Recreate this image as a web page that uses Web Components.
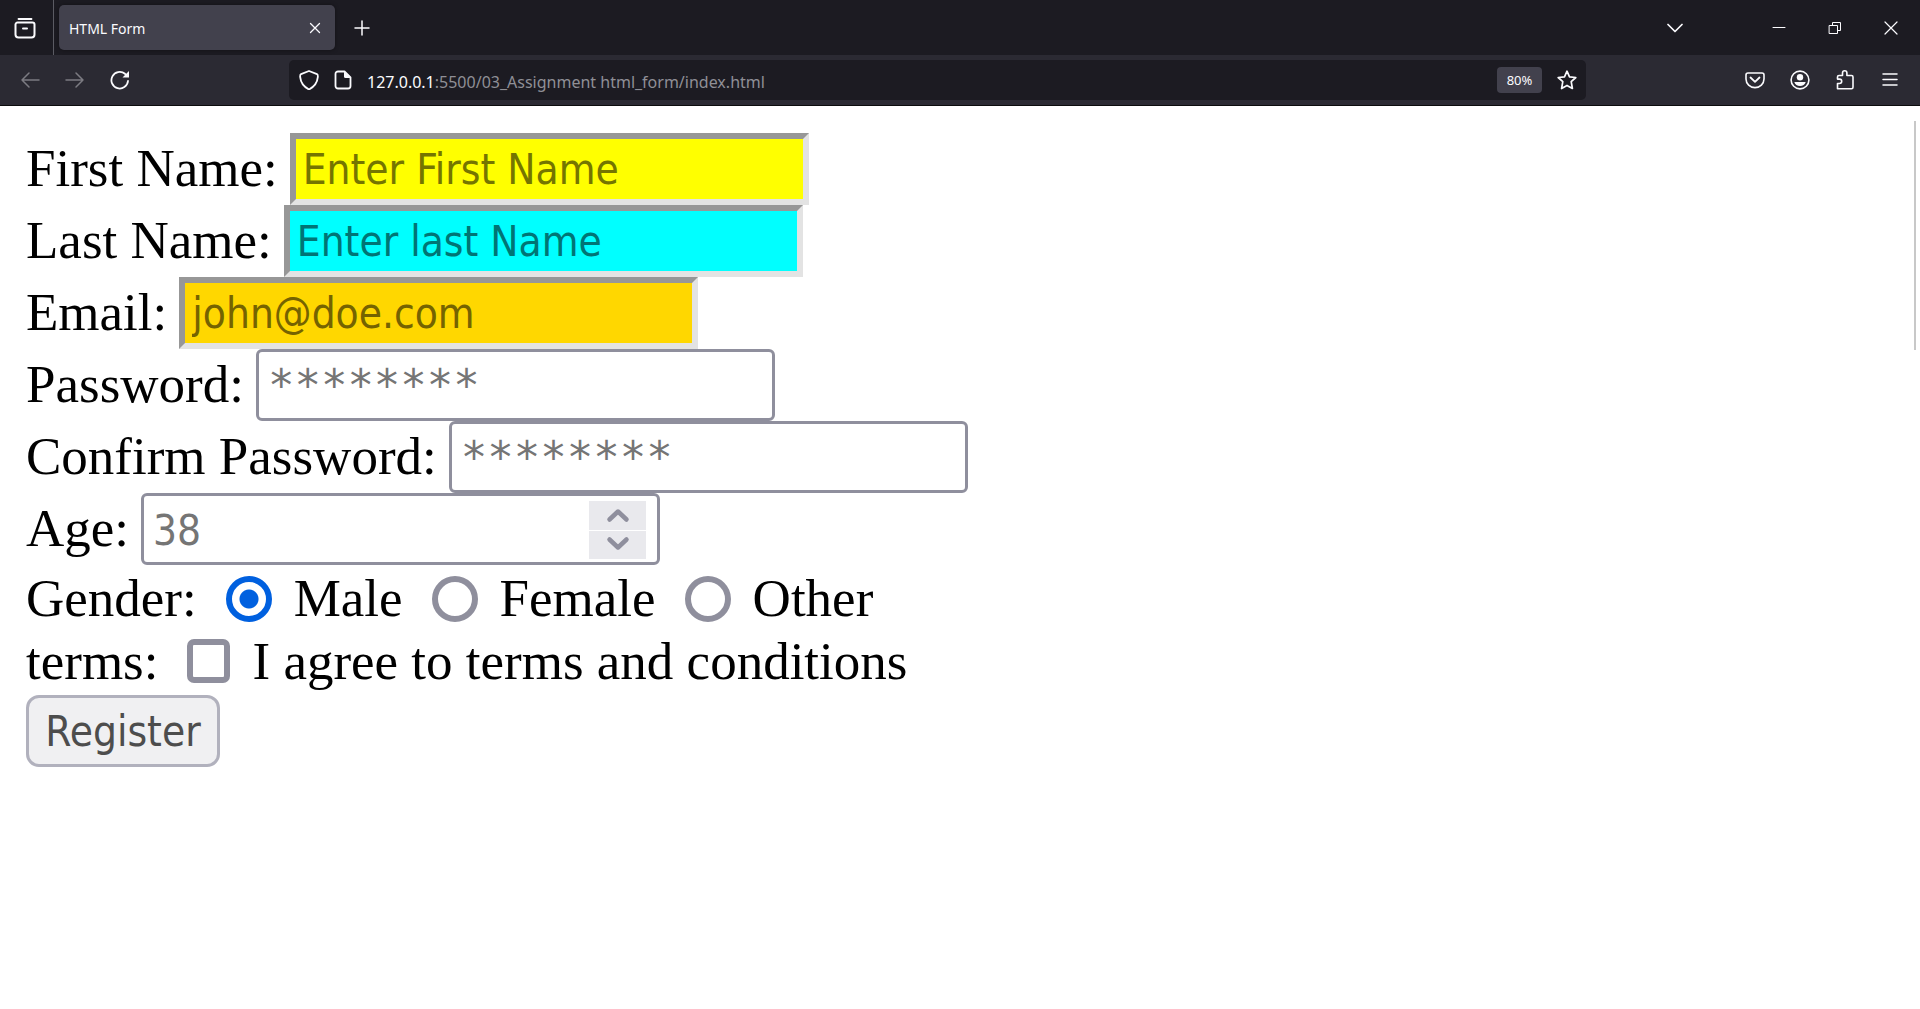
<!DOCTYPE html>
<html lang="en">
<head>
<meta charset="utf-8">
<title>HTML Form</title>
<style>
html, body { margin: 0; height: 100%; }
body { background: #fff; overflow: hidden; }
</style>
</head>
<body>
<browser-window>
  <tab-strip slot="chrome">HTML Form</tab-strip>
  <nav-bar slot="chrome" host="127.0.0.1" path=":5500/03_Assignment html_form/index.html" zoom="80%"></nav-bar>
  <register-form>
    <form-field label="First Name:" placeholder="Enter First Name" fill="#ffff00" ink="#757500"></form-field>
    <form-field label="Last Name:" placeholder="Enter last Name" fill="#00ffff" ink="#007575"></form-field>
    <form-field label="Email:" type="email" placeholder="john@doe.com" fill="#ffd700" ink="#756300"></form-field>
    <form-field label="Password:" type="password" placeholder="********"></form-field>
    <form-field label="Confirm Password:" type="password" placeholder="********"></form-field>
    <form-field label="Age:" type="number" placeholder="38"></form-field>
    <choice-row label="Gender:" type="radio" options="Male,Female,Other" checked="Male"></choice-row>
    <choice-row label="terms:" type="checkbox" options="I agree to terms and conditions"></choice-row>
    <submit-button>Register</submit-button>
  </register-form>
</browser-window>
<script>
const ICONS = {
  firefoxview: [22, '<path d="M4.500 2h13" stroke-width="1.800"/><path d="M3.500 5.500h15a2 2 0 0 1 2 2v10a3 3 0 0 1-3 3h-13a3 3 0 0 1-3-3v-10a2 2 0 0 1 2-2z" stroke-width="2"/><path d="M9 11.500h4" stroke-width="2"/>'],
  close: [12, '<path d="M1.500 1.500l9 9m0-9l-9 9" stroke-width="1.300"/>'],
  plus: [16, '<path d="M8 1v14M1 8h14" stroke-width="1.500"/>'],
  down: [16, '<path d="M1 4.500l7 7 7-7" stroke-width="1.700"/>'],
  minimize: [14, '<path d="M1 6.500h12" stroke-width="1"/>'],
  restore: [14, '<path d="M1.500 4.500h8v8h-8zM4.500 4.500v-3h8v8h-3" stroke-width="1" stroke-linejoin="miter"/>'],
  quit: [14, '<path d="M1 1l12 12m0-12L1 13" stroke-width="1.200"/>'],
  back: [20, '<path d="M19 10H2M9 3l-7 7 7 7" stroke-width="1.500"/>'],
  forward: [20, '<path d="M1 10h17M11 3l7 7-7 7" stroke-width="1.500"/>'],
  reload: [20, '<path d="M18 11a8.300 8.300 0 1 1-3-7.200l2 2" stroke-width="1.800"/><path d="M19 1v6.500h-6.500z" fill="currentColor" stroke="none"/>'],
  shield: [20, '<path d="M10 1l8 3.200c1 .4 1 1 .8 3-.5 5.500-3 9.300-8.800 12.300C4.200 16.500 1.700 12.700 1.200 7.200 1 5.200 1 4.600 2 4.200z" stroke-width="1.800"/>'],
  page: [20, '<path d="M5 1.500h6.500l6 6V16a2.500 2.500 0 0 1-2.500 2.500H5A2.500 2.500 0 0 1 2.500 16V4A2.500 2.500 0 0 1 5 1.500z" stroke-width="1.800"/><path d="M11 1.500l6.500 6.500H12.500A1.500 1.500 0 0 1 11 6.500z" fill="currentColor" stroke="none"/>'],
  star: [20, '<path d="M10 1.200l2.500 5.600 6.300.7-4.600 4.200 1.200 6.800L10 15.400l-5.400 3.100 1.200-6.800L1.200 7.500l6.300-.7z" stroke-width="1.700"/>'],
  pocket: [20, '<path d="M3 3h14a2 2 0 0 1 2 2v4a9 8.600 0 0 1-18 0V5a2 2 0 0 1 2-2z" stroke-width="1.600"/><path d="M5.500 7.500L10 11.800l4.500-4.300" stroke-width="1.800"/>'],
  account: [20, '<circle cx="10" cy="10" r="8.900" stroke-width="1.600"/><circle cx="10" cy="7.300" r="3.200" fill="currentColor" stroke="none"/><path d="M4.300 12h11.400c-.7 2.500-3 4-5.700 4s-5-1.500-5.700-4z" fill="currentColor" stroke="none"/>'],
  puzzle: [20, '<path d="M2.500 18.800V13.500H4.500a2.200 2.200 0 0 0 0-4.400H2.500V7A1.500 1.500 0 0 1 4 5.500h3.500V3a2.200 2.200 0 0 1 4.400 0v2.500H16.500A1.500 1.500 0 0 1 18 7v10.300a1.500 1.500 0 0 1-1.500 1.500z" stroke-width="1.600"/>'],
  menu: [20, '<path d="M3 4h14M3 9.500h14M3 15h14" stroke-width="1.500"/>'],
  spinup: [24, '<path d="M3.500 16.500l8.500-8 8.500 8" stroke-width="4.500"/>'],
  spindown: [24, '<path d="M3.500 6.500l8.500 8 8.500-8" stroke-width="4.500"/>']
};
const icon = name => {
  const [size, body] = ICONS[name];
  return `<svg width="${size}" height="${size}" viewBox="0 0 ${size} ${size}" fill="none" stroke="currentColor" stroke-linecap="round" stroke-linejoin="round" aria-hidden="true">${body}</svg>`;
};
const iconButton = (name, label, cls = '') => `<button type="button" class="${cls}" aria-label="${label}">${icon(name)}</button>`;

class Base extends HTMLElement {
  connectedCallback() {
    if (this.shadowRoot) return;
    this.attachShadow({ mode: 'open' }).innerHTML = `<style>:host, * { box-sizing: border-box; } svg { display: block; flex: none; }</style>${this.render()}`;
  }
  attr(name, fallback = '') { return this.getAttribute(name) || fallback; }
}

customElements.define('browser-window', class extends Base {
  render() {
    return `<style>
      :host { display: flex; flex-direction: column; height: 100vh; position: relative; }
      main { flex: 1; background: #fff; }
      .thumb { position: absolute; right: 4px; top: 121px; width: 2px; height: 229px; background: #c8c8c8; }
    </style><slot name="chrome"></slot><main><slot></slot></main><div class="thumb"></div>`;
  }
});

customElements.define('tab-strip', class extends Base {
  render() {
    return `<style>
      :host { display: flex; align-items: center; height: 55px; background: #1c1b22; color: #fbfbfe; font: 14px "Noto Sans", sans-serif; }
      button { display: flex; align-items: center; justify-content: center; padding: 0; border: 0; background: none; color: inherit; }
      .view { width: 54px; height: 55px; padding-right: 4px; border-right: 1px solid #5b5b63; }
      .tab { display: flex; align-items: center; justify-content: space-between; width: 276px; height: 45px; margin-left: 5px; padding: 0 14px 0 10px; border-radius: 5px; background: #42414d; box-shadow: 0 0 4px rgba(0,0,0,.4); }
      .tab span { padding-top: 1px; }
      .new { width: 54px; height: 45px; }
      .wc { width: 56px; height: 45px; }
      .list { margin-left: auto; margin-right: 48px; width: 56px; height: 45px; }
      .wc:last-child { margin-right: 1px; }
    </style>
    ${iconButton('firefoxview', 'View recent browsing', 'view')}
    <div class="tab"><span><slot></slot></span>${iconButton('close', 'Close tab')}</div>
    ${iconButton('plus', 'New tab', 'new')}
    ${iconButton('down', 'List all tabs', 'list')}
    ${iconButton('minimize', 'Minimize', 'wc')}${iconButton('restore', 'Restore', 'wc')}${iconButton('quit', 'Close', 'wc')}`;
  }
});

customElements.define('nav-bar', class extends Base {
  render() {
    return `<style>
      :host { display: flex; align-items: center; height: 51px; background: #2b2a33; border-bottom: 1px solid #0c0c0d; color: #fbfbfe; font: 16px "Noto Sans", sans-serif; }
      button { display: flex; align-items: center; justify-content: center; width: 45px; height: 40px; padding: 0; border: 0; background: none; color: inherit; }
      .left { display: flex; width: 289px; padding-left: 7px; }
      .off { color: #7c7b82; }
      .url { flex: 1; display: flex; align-items: center; height: 40px; padding: 0 8px 0 10px; border-radius: 5px; background: #1c1b22; }
      .url svg { margin-right: 14px; }
      .address { flex: 1; padding-top: 4px; }
      .path { color: #8f8f96; }
      .zoom { width: 45px; height: 26px; margin-right: 14px; border-radius: 4px; background: #42414d; font: 13px "Noto Sans", sans-serif; }
      .star { width: 22px; }
      .star svg { margin: 0; }
      .right { display: flex; justify-content: flex-end; width: 334px; padding-right: 8px; }
    </style>
    <div class="left">${iconButton('back', 'Back', 'off')}${iconButton('forward', 'Forward', 'off')}${iconButton('reload', 'Reload')}</div>
    <div class="url">${icon('shield')}${icon('page')}
      <span class="address"><span>${this.attr('host')}</span><span class="path">${this.attr('path')}</span></span>
      <button type="button" class="zoom">${this.attr('zoom')}</button>${iconButton('star', 'Bookmark', 'star')}</div>
    <div class="right">${iconButton('pocket', 'Save to Pocket')}${iconButton('account', 'Account')}${iconButton('puzzle', 'Extensions')}${iconButton('menu', 'Menu')}</div>`;
  }
});

customElements.define('register-form', class extends Base {
  render() {
    return `<style>
      :host { display: block; padding: 27px 26px; color: #000; font: 53px "Liberation Serif", serif; --control: "DejaVu Sans Condensed", "DejaVu Sans", sans-serif; }
      form { display: flex; flex-direction: column; align-items: flex-start; }
    </style><form><slot></slot></form>`;
  }
});

customElements.define('form-field', class extends Base {
  render() {
    const type = this.attr('type', 'text');
    const fill = this.attr('fill');
    const spin = type === 'number'
      ? `<span class="spin">${iconButton('spinup', 'Increase')}${iconButton('spindown', 'Decrease')}</span>` : '';
    return `<style>
      :host { display: flex; gap: 12px; height: 72px; }
      label { line-height: 70px; white-space: nowrap; }
      .box { display: flex; width: 519px; height: 72px; padding: 0 9px; border: 3px solid #8f8f9d; border-radius: 6px; background: #fff; }
      .box.bevel { padding: 0 7px; border: 6px solid; border-color: #979797 #e3e3e3 #e3e3e3 #979797; border-radius: 0; }
      input { flex: 1; min-width: 0; padding: 0; border: 0; outline: 0; background: none; font: 42px var(--control); appearance: textfield; }
      input[type=password] { font: 44px "DejaVu Sans Mono", monospace; }
      input[type=number] { padding-top: 2px; }
      input::placeholder { color: ${this.attr('ink', '#757575')}; opacity: 1; }
      input::-webkit-inner-spin-button { appearance: none; }
      .spin { display: flex; flex-direction: column; gap: 1px; width: 57px; margin: 5px 2px 3px 0; }
      .spin button { flex: 1; display: flex; align-items: center; justify-content: center; padding: 0; border: 0; background: #e9e9ed; color: #8f8f9d; }
    </style>
    <label for="field">${this.attr('label')}</label>
    <span class="box ${fill ? 'bevel' : ''}" style="${fill ? `background:${fill}` : ''}"><input id="field" type="${type}" placeholder="${this.attr('placeholder')}">${spin}</span>`;
  }
});

customElements.define('choice-row', class extends Base {
  render() {
    const type = this.attr('type');
    const items = this.attr('options').split(',').map((text, i) =>
      `<input type="${type}" name="choice" id="c${i}" ${text === this.attr('checked') ? 'checked' : ''}><label for="c${i}">${text}</label>`).join('');
    return `<style>
      :host { display: block; padding-top: 3px; line-height: 60px; }
      fieldset { display: flex; align-items: center; gap: 12px; margin: 0; padding: 0; border: 0; }
      input { appearance: none; flex: none; width: 46px; height: 46px; margin: 2px 10px 0 17px; border: 6px solid #8f8f9d; border-radius: 50%; background: #fff; }
      input[type=checkbox] { width: 43px; height: 44px; margin-top: 0; border-radius: 7px; }
      input:checked { border-color: #0060df; background: radial-gradient(circle, #0060df 9px, #fff 10px); }
    </style><fieldset aria-label="${this.attr('label')}"><span>${this.attr('label')}</span>${items}</fieldset>`;
  }
});

customElements.define('submit-button', class extends Base {
  render() {
    return `<style>
      :host { display: block; padding-top: 4px; }
      button { display: block; width: 194px; height: 72px; padding: 0; border: 3px solid #b1b1bd; border-radius: 13px; background: #f0f0f2; color: #4d4d4d; font: 42px var(--control); }
    </style><button type="button"><slot></slot></button>`;
  }
});
</script>
</body>
</html>
